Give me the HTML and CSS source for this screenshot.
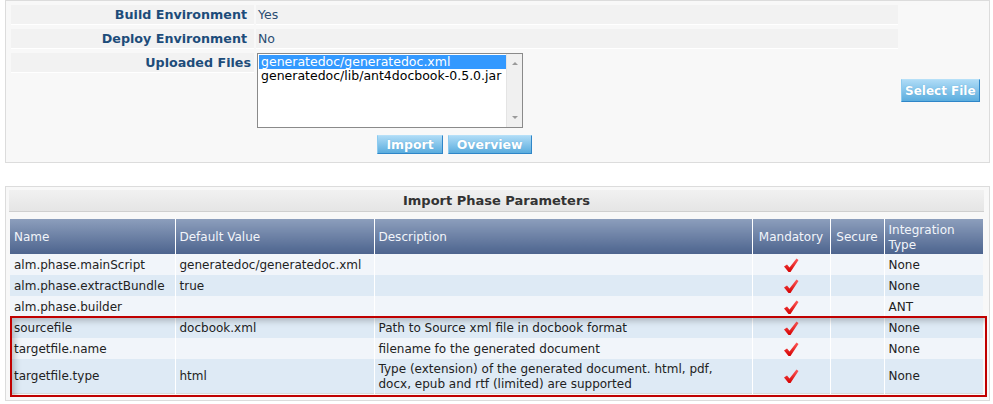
FILE: index.html
```html
<!DOCTYPE html>
<html>
<head>
<meta charset="utf-8">
<link rel="stylesheet" href="styles.css">
</head>
<body>
<div class="panel form-panel">
  <div class="form-grid">
    <div class="label">Build Environment</div>
    <div class="value">Yes</div>
    <div class="spacer"></div>

    <div class="label">Deploy Environment</div>
    <div class="value">No</div>
    <div class="spacer"></div>

    <div class="label label-files">Uploaded Files</div>
    <div class="files-cell">
      <div class="listbox">
        <div class="list-items">
          <div class="item selected">generatedoc/generatedoc.xml</div>
          <div class="item">generatedoc/lib/ant4docbook-0.5.0.jar</div>
        </div>
        <div class="scrollbar">
          <span class="arrow up"></span>
          <span class="arrow down"></span>
        </div>
      </div>
    </div>
    <div class="select-cell"><button class="btn btn-select">Select File</button></div>

    <div class="actions">
      <button class="btn">Import</button>
      <button class="btn">Overview</button>
    </div>
  </div>
</div>

<div class="panel params-panel">
  <div class="title-bar">Import Phase Parameters</div>
  <div class="table-wrap">
    <table class="params">
      <colgroup>
        <col class="c-name">
        <col class="c-default">
        <col class="c-desc">
        <col class="c-mand">
        <col class="c-secure">
        <col class="c-int">
      </colgroup>
      <thead>
        <tr>
          <th>Name</th>
          <th>Default Value</th>
          <th>Description</th>
          <th class="center">Mandatory</th>
          <th class="center">Secure</th>
          <th>Integration Type</th>
        </tr>
      </thead>
      <tbody>
        <tr class="odd">
          <td>alm.phase.mainScript</td>
          <td>generatedoc/generatedoc.xml</td>
          <td></td>
          <td class="center"><svg class="check" viewBox="0 0 16 15"><defs><linearGradient id="g1" x1="0" y1="0" x2="0" y2="1"><stop offset="0" stop-color="#ff5a5a"/><stop offset="1" stop-color="#d40000"/></linearGradient></defs><polygon points="1,8.5 4,6.5 6.5,9.5 13.5,0.5 15.5,2 7.5,14 5.5,14" fill="url(#g1)"/></svg></td>
          <td></td>
          <td>None</td>
        </tr>
        <tr class="even">
          <td>alm.phase.extractBundle</td>
          <td>true</td>
          <td></td>
          <td class="center"><svg class="check" viewBox="0 0 16 15"><polygon points="1,8.5 4,6.5 6.5,9.5 13.5,0.5 15.5,2 7.5,14 5.5,14" fill="url(#g1)"/></svg></td>
          <td></td>
          <td>None</td>
        </tr>
        <tr class="odd">
          <td>alm.phase.builder</td>
          <td></td>
          <td></td>
          <td class="center"><svg class="check" viewBox="0 0 16 15"><polygon points="1,8.5 4,6.5 6.5,9.5 13.5,0.5 15.5,2 7.5,14 5.5,14" fill="url(#g1)"/></svg></td>
          <td></td>
          <td>ANT</td>
        </tr>
        <tr class="even">
          <td>sourcefile</td>
          <td>docbook.xml</td>
          <td>Path to Source xml file in docbook format</td>
          <td class="center"><svg class="check" viewBox="0 0 16 15"><polygon points="1,8.5 4,6.5 6.5,9.5 13.5,0.5 15.5,2 7.5,14 5.5,14" fill="url(#g1)"/></svg></td>
          <td></td>
          <td>None</td>
        </tr>
        <tr class="odd">
          <td>targetfile.name</td>
          <td></td>
          <td>filename fo the generated document</td>
          <td class="center"><svg class="check" viewBox="0 0 16 15"><polygon points="1,8.5 4,6.5 6.5,9.5 13.5,0.5 15.5,2 7.5,14 5.5,14" fill="url(#g1)"/></svg></td>
          <td></td>
          <td>None</td>
        </tr>
        <tr class="even tall">
          <td>targetfile.type</td>
          <td>html</td>
          <td>Type (extension) of the generated document. html, pdf, docx, epub and rtf (limited) are supported</td>
          <td class="center"><svg class="check" viewBox="0 0 16 15"><polygon points="1,8.5 4,6.5 6.5,9.5 13.5,0.5 15.5,2 7.5,14 5.5,14" fill="url(#g1)"/></svg></td>
          <td></td>
          <td>None</td>
        </tr>
      </tbody>
    </table>
    <div class="highlight"></div>
  </div>
</div>
</body>
</html>
```

FILE: styles.css
```css
* { box-sizing: border-box; }

body {
  margin: 0;
  background: #ffffff;
  font-family: "DejaVu Sans", Verdana, sans-serif;
  font-size: 12px;
  color: #222;
}

.panel {
  margin-left: 5px;
  width: 985px;
  border: 1px solid #dcdcdc;
  background: #f8f8f8;
}

.form-panel {
  height: 163px;
  padding: 4px 0 0 5px;
}

.form-grid {
  display: grid;
  grid-template-columns: 243px 642px auto;
  column-gap: 2px;
  row-gap: 4px;
}

.label {
  height: 20px;
  background: #f2f2f2;
  border-bottom: 1px solid #ffffff;
  text-align: right;
  padding-right: 7px;
  font-weight: bold;
  font-size: 12.7px;
  line-height: 19px;
  color: #1d4c7a;
}

.label-files { padding-right: 3px; }

.value {
  height: 20px;
  background: #f2f2f2;
  border-bottom: 1px solid #ffffff;
  padding-left: 2px;
  font-size: 12.5px;
  line-height: 19px;
  color: #2a4d72;
}

.files-cell { padding-left: 1px; }

.listbox {
  width: 266px;
  height: 75px;
  border: 1px solid #8a8a8a;
  background: #fff;
  display: flex;
}

.list-items {
  flex: 1;
  overflow: hidden;
  padding: 1px 0 0 1px;
}

.item {
  white-space: nowrap;
  font-size: 12.5px;
  line-height: 14px;
  height: 14px;
  padding-left: 2px;
  color: #000;
}

.item.selected {
  background: #3399ff;
  color: #fff;
}

.scrollbar {
  width: 16px;
  background: #f0f0f0;
  border-left: 1px solid #e4e4e4;
  position: relative;
}

.arrow {
  position: absolute;
  left: 5px;
  width: 0;
  height: 0;
  border-left: 3px solid transparent;
  border-right: 3px solid transparent;
}

.arrow.up { top: 8px; border-bottom: 3px solid #9a9a9a; }
.arrow.down { bottom: 8px; border-top: 3px solid #9a9a9a; }

.select-cell {
  align-self: center;
  padding-left: 1px;
}

.btn {
  font-family: "DejaVu Sans", Verdana, sans-serif;
  font-weight: bold;
  font-size: 12.5px;
  color: #ffffff;
  background: linear-gradient(#aedbf6, #5badde);
  border: 1px solid #4a9fd8;
  border-top-color: #b6e0f8;
  border-left-color: #8ccbf0;
  border-bottom-color: #2f86c8;
  border-right-color: #2f86c8;
  height: 19px;
  padding: 0 8px;
  line-height: 16px;
  margin: 0;
  white-space: nowrap;
  text-shadow: 0 0 1px #5aa4d4;
}

.btn-select {
  height: 23px;
  padding: 0 3px;
  font-size: 12px;
}

.actions {
  grid-column: 1 / 3;
  display: flex;
  justify-content: center;
  gap: 5px;
  margin-top: 3px;
}

.params-panel {
  margin-top: 23px;
  padding: 3px 5px 6px 3px;
}

.title-bar {
  height: 22px;
  background: linear-gradient(#f1f1f1, #e5e5e5);
  border-bottom: 1px solid #cfcfcf;
  text-align: center;
  font-weight: bold;
  font-size: 13px;
  line-height: 21px;
  color: #333;
}

.table-wrap {
  position: relative;
  margin-top: 7px;
  margin-left: 1px;
}

.params {
  width: 973px;
  table-layout: fixed;
  border-collapse: collapse;
  border-bottom: 1px solid #d8d8d8;
}

.c-name { width: 165px; }
.c-default { width: 199px; }
.c-desc { width: 378px; }
.c-mand { width: 78px; }
.c-secure { width: 54px; }
.c-int { width: 99px; }

.params th {
  background: linear-gradient(#8c9ebc, #4d648e);
  color: #f2f5fa;
  font-weight: normal;
  text-align: left;
  padding: 2px 4px 0;
  height: 35px;
  line-height: 15px;
  border-left: 1px solid #ffffff;
  border-right: 1px solid #ffffff;
}

.params th:first-child { border-left: none; }
.params th:last-child { border-right: none; }

.params th.center { text-align: center; padding: 2px 2px 0; }

.params td {
  padding: 2px 4px 0;
  height: 21px;
  line-height: 15px;
  border-left: 1px solid #ffffff;
  border-right: 1px solid #ffffff;
  color: #222;
  white-space: normal;
}

.params td:first-child { border-left: none; }
.params td:last-child { border-right: none; }

.params td.center { text-align: center; }

.params tr.tall td { height: 34px; }

tr.odd td { background: #f1f5fa; }
tr.even td { background: #deeaf5; }

.check {
  width: 16px;
  height: 15px;
  display: inline-block;
  vertical-align: middle;
}

.highlight {
  position: absolute;
  left: 0;
  top: 97px;
  width: 977px;
  height: 81px;
  border: 2px solid #c00000;
  box-shadow: inset 5px 5px 6px -2px rgba(0, 0, 0, 0.22);
  pointer-events: none;
}
```
